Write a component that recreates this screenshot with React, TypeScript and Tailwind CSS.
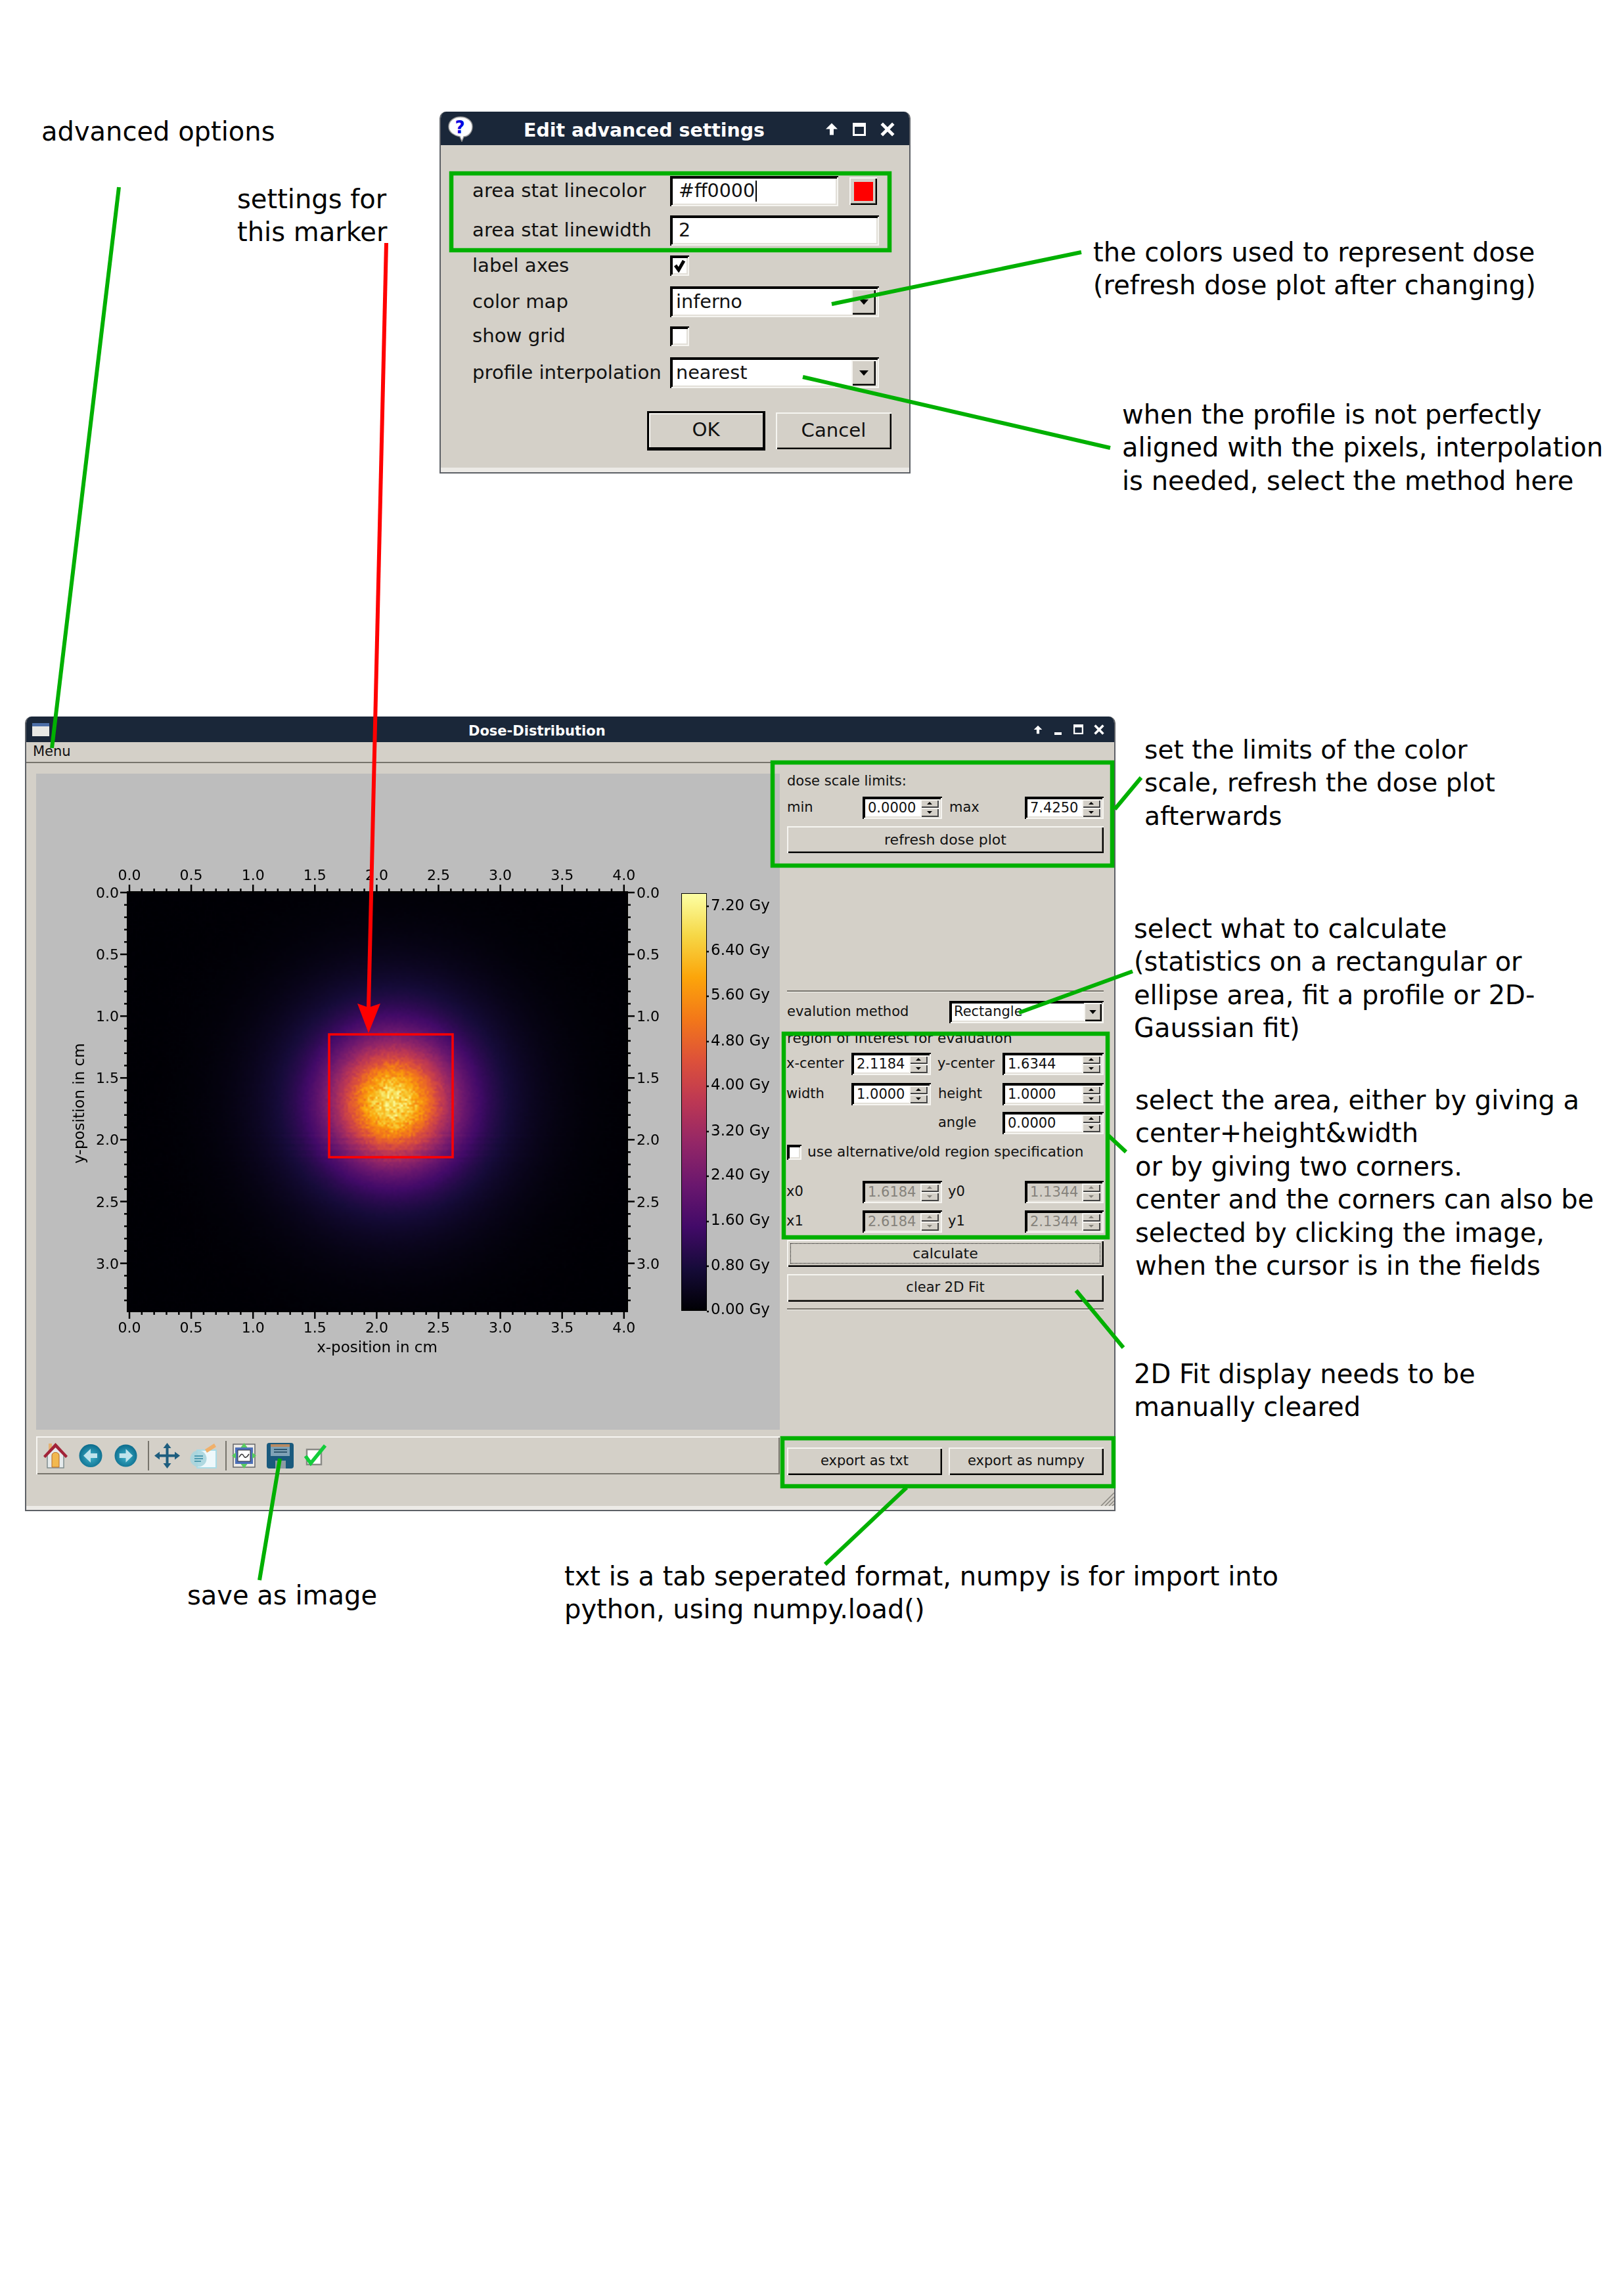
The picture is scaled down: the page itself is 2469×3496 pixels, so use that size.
import React, { useEffect, useRef } from 'react';

const sunken = 'shadow-[inset_2px_2px_0_#000,inset_-2px_-2px_0_#f6f5f1,inset_4px_4px_0_#000,inset_-4px_-4px_0_#e2dfd8]';
const raised = 'shadow-[inset_2px_2px_0_#f6f5f1,inset_-2px_-2px_0_#000,inset_-3px_-3px_0_#77746c]';
const spinRaised = 'shadow-[inset_2px_2px_0_#f6f5f1,inset_-2px_-2px_0_#444]';

const inferno: [number, number, number][] = [
    [0, 0, 4], [22, 11, 57], [66, 10, 104], [106, 23, 110], [147, 38, 103], [188, 55, 84],
    [221, 81, 58], [243, 120, 25], [252, 165, 10], [246, 215, 70], [252, 255, 164],
];

const mapColor = (v: number) => {
    const t = Math.max(0, Math.min(0.9999, v)) * 10;
    const i = Math.floor(t);
    const f = t - i;
    return inferno[i].map((c, k) => c + (inferno[i + 1][k] - c) * f);
};

// the dose picture: a noisy gaussian, drawn in coarse cells and scaled up
const DoseImage: React.FC = () => {
    const ref = useRef<HTMLCanvasElement>(null);
    useEffect(() => {
        const ctx = ref.current?.getContext('2d');
        if (!ctx) return;
        const w = 254;
        const h = 213;
        const img = ctx.createImageData(w, h);
        let seed = 1234567;
        const rnd = () => {
            seed = (seed * 16807) % 2147483647;
            return seed / 2147483647;
        };
        for (let y = 0; y < h; y++) {
            for (let x = 0; x < w; x++) {
                const dx = (x - 134.3) * 3;
                const dy = (y - 106.3) * 3;
                const r2 = dx * dx + dy * dy;
                const core = Math.exp(-r2 / (2 * 58 * 58));
                const tail = Math.exp(-r2 / (2 * 112 * 112));
                const noise = 1 + (rnd() + rnd() - 1) * (0.03 + 0.13 * core);
                // faint horizontal bands low in the beam
                const band = dy > 45 && dy < 90 ? 1 + 0.04 * Math.sin(y * 1.9) : 1;
                const v = (0.62 * core + 0.31 * tail) * noise * band + rnd() * 0.004;
                const [r, g, b] = mapColor(v);
                const p = (y * w + x) * 4;
                img.data[p] = r;
                img.data[p + 1] = g;
                img.data[p + 2] = b;
                img.data[p + 3] = 255;
            }
        }
        ctx.putImageData(img, 0, 0);
    }, []);
    return <canvas ref={ref} width={254} height={213} className="absolute left-[139px] top-[180px] h-[639px] w-[761px]" />;
};

const xLabels = ['0.0', '0.5', '1.0', '1.5', '2.0', '2.5', '3.0', '3.5', '4.0'];
const yLabels = ['0.0', '0.5', '1.0', '1.5', '2.0', '2.5', '3.0'];
const barLabels: [string, number, number][] = [
    ['7.20 Gy', 1378, 1380], ['6.40 Gy', 1446, 1449], ['5.60 Gy', 1514, 1517], ['4.80 Gy', 1584, 1586],
    ['4.00 Gy', 1651, 1654], ['3.20 Gy', 1721, 1723], ['2.40 Gy', 1788, 1791], ['1.60 Gy', 1857, 1860],
    ['0.80 Gy', 1926, 1928], ['0.00 Gy', 1993, 1997],
];

const PlotAxes: React.FC = () => {
    const xMinor = Array.from({ length: 41 }, (_, i) => 197 + i * 18.82);
    const yMinor = Array.from({ length: 34 }, (_, i) => 1359 + i * 18.82);
    return (
        <svg viewBox="55 1178 1132 999" className="absolute inset-0 h-full w-full">
            <g stroke="#000" strokeWidth="2.500">
                {xMinor.map((x, i) => {
                    const len = i % 5 === 0 ? 11 : 5;
                    return (
                        <g key={i}>
                            <line x1={x} x2={x} y1={1358 - len} y2={1358} />
                            <line x1={x} x2={x} y1={1997} y2={1997 + len} />
                        </g>
                    );
                })}
                {yMinor.map((y, i) => {
                    const len = i % 5 === 0 ? 11 : 5;
                    return (
                        <g key={i}>
                            <line x1={194 - len} x2={194} y1={y} y2={y} />
                            <line x1={955} x2={955 + len} y1={y} y2={y} />
                        </g>
                    );
                })}
                {barLabels.map(([t, , y]) => <line key={t} x1={1076} x2={1079} y1={y} y2={y} />)}
            </g>
            <g fill="#000" fontSize="22" fontFamily="'DejaVu Sans',sans-serif">
                {xLabels.map((t, i) => (
                    <g key={t} textAnchor="middle">
                        <text x={197 + i * 94.1} y={1340}>{t}</text>
                        <text x={197 + i * 94.1} y={2029}>{t}</text>
                    </g>
                ))}
                {yLabels.map((t, i) => (
                    <g key={t}>
                        <text x={181} y={1367 + i * 94.1} textAnchor="end">{t}</text>
                        <text x={969} y={1367 + i * 94.1}>{t}</text>
                    </g>
                ))}
                <g fontSize="23">
                    {barLabels.map(([t, y]) => <text key={t} x={1082} y={y + 8}>{t}</text>)}
                    <text x={574} y={2059} textAnchor="middle">x-position in cm</text>
                    <text x={0} y={0} textAnchor="middle" transform="translate(128 1680) rotate(-90)">y-position in cm</text>
                </g>
            </g>
            <rect x="194" y="1358" width="761" height="639" fill="none" stroke="#000" strokeWidth="2" />
            <rect x="501" y="1575" width="188" height="187" fill="none" stroke="#ff0000" strokeWidth="3.500" />
        </svg>
    );
};

const Spin: React.FC<{ value: string; disabled?: boolean; className: string }> = ({ value, disabled, className }) => (
    <div className={`flex h-[34px] items-center pl-[8px] pr-[5px] ${sunken} ${disabled ? 'bg-[#d4d0c8] text-[#85827b]' : 'bg-white text-[#111]'} ${className}`}>
        <span className="flex-1 leading-none">{value}</span>
        <div className="flex h-[27px] w-[28px] flex-col">
            <div className={`flex flex-1 items-center justify-center bg-[#d4d0c8] ${spinRaised}`}>
                <svg viewBox="0 0 8 4" className="h-[4px] w-[8px]"><path d="M0 4h8L4 0z" fill={disabled ? '#85827b' : '#000'} /></svg>
            </div>
            <div className={`flex flex-1 items-center justify-center bg-[#d4d0c8] ${spinRaised}`}>
                <svg viewBox="0 0 8 4" className="h-[4px] w-[8px]"><path d="M0 0h8L4 4z" fill={disabled ? '#85827b' : '#000'} /></svg>
            </div>
        </div>
    </div>
);

const ComboArrow: React.FC<{ large?: boolean }> = ({ large }) => (
    <div className={`flex items-center justify-center bg-[#d4d0c8] ${raised} ${large ? 'h-[39px] w-[37px]' : 'h-[28px] w-[27px]'}`}>
        <svg viewBox="0 0 14 8" className={large ? 'h-[8px] w-[14px]' : 'h-[6px] w-[11px]'}><path d="M0 0h14L7 8z" fill="#000" /></svg>
    </div>
);

const PanelButton: React.FC<{ label: string; className: string }> = ({ label, className }) => (
    <div className={`flex items-center justify-center bg-[#d4d0c8] text-[#111] ${raised} ${className}`}>{label}</div>
);

const Separator: React.FC<{ className: string }> = ({ className }) => (
    <div className={`h-[3px] border-t-2 border-b border-t-[#77746c] border-b-[#f6f5f1] ${className}`} />
);

const UpArrow: React.FC<{ className: string }> = ({ className }) => (
    <svg viewBox="0 0 20 20" className={className}><path d="M10 1l9 9h-6v9H7v-9H1z" fill="#fff" /></svg>
);
const MaxIcon: React.FC<{ className: string }> = ({ className }) => (
    <svg viewBox="0 0 20 20" className={className}><path d="M0 0h20v20H0zM3 6v11h14V6z" fill="#fff" fillRule="evenodd" /></svg>
);
const CloseIcon: React.FC<{ className: string }> = ({ className }) => (
    <svg viewBox="0 0 20 20" className={className}><path d="M2 2l16 16M18 2L2 18" stroke="#fff" strokeWidth="4.5" /></svg>
);

const AdvancedDialog: React.FC = () => (
    <div className="absolute left-[669px] top-[170px] flex h-[551px] w-[717px] flex-col overflow-hidden rounded-t-[10px] border-x-2 border-b-2 border-x-[#5d6066] border-b-[#5d6066] bg-[#d4d0c8] text-[29.2px] text-[#111]">
        {/* Title bar */}
        <div className="-mx-[2px] flex h-[51px] shrink-0 items-center bg-[#1a2739]">
            <svg viewBox="0 0 38 40" className="ml-[13px] h-[40px] w-[38px]">
                <path d="M19 2c10 0 18 6 18 15s-7 15-13 15l-3 7-3-7C11 31 1 26 1 17S9 2 19 2z" fill="#fff" stroke="#999" strokeWidth="1.5" />
                <text x="18" y="27" fill="#0000e0" fontSize="26" fontWeight="700" textAnchor="middle" fontFamily="'DejaVu Sans',sans-serif">?</text>
            </svg>
            <span className="ml-[77px] mt-[7px] text-[28.400px] font-bold text-white">Edit advanced settings</span>
            <UpArrow className="ml-auto mt-[2px] h-[21px] w-[20px]" />
            <MaxIcon className="ml-[22px] mt-[2px] h-[20px] w-[20px]" />
            <CloseIcon className="ml-[22px] mr-[24px] mt-[2px] h-[22px] w-[22px]" />
        </div>
        <div className="ml-[48px] mt-[47px] flex h-[46px] items-center">
            <span className="w-[301px]">area stat linecolor</span>
            <div className={`flex h-[46px] w-[256px] items-center bg-white pl-[13px] text-[28.5px] ${sunken}`}>
                #ff0000<span className="ml-[1px] h-[32px] w-[2px] bg-black" />
            </div>
            <div className={`ml-[17px] flex h-[42px] w-[42px] items-center justify-center bg-[#d4d0c8] ${raised}`}>
                <div className="h-[29px] w-[29px] bg-[#ff0000]" />
            </div>
        </div>
        <div className="ml-[48px] mt-[14px] flex h-[46px] items-center">
            <span className="w-[301px]">area stat linewidth</span>
            <div className={`flex h-[46px] w-[318px] items-center bg-white pl-[13px] text-[28.5px] ${sunken}`}>2</div>
        </div>
        <div className="ml-[48px] mt-[15px] flex h-[31px] items-center">
            <span className="w-[301px]">label axes</span>
            <div className={`flex h-[31px] w-[29px] items-center justify-center bg-white ${sunken}`}>
                <svg viewBox="0 0 20 20" className="h-[20px] w-[20px]"><path d="M3 9l5 7L16 2" fill="none" stroke="#000" strokeWidth="5" /></svg>
            </div>
        </div>
        <div className="ml-[48px] mt-[16px] flex h-[47px] items-center">
            <span className="w-[301px]">color map</span>
            <div className={`flex h-[47px] w-[318px] items-center justify-between bg-white pl-[9px] pr-[5px] text-[28.7px] ${sunken}`}>
                inferno
                <ComboArrow large />
            </div>
        </div>
        <div className="ml-[48px] mt-[14px] flex h-[30px] items-center">
            <span className="w-[301px]">show grid</span>
            <div className={`h-[30px] w-[29px] bg-white ${sunken}`} />
        </div>
        <div className="ml-[48px] mt-[17px] flex h-[47px] items-center">
            <span className="w-[301px]">profile interpolation</span>
            <div className={`flex h-[47px] w-[318px] items-center justify-between bg-white pl-[9px] pr-[5px] text-[28.7px] ${sunken}`}>
                nearest
                <ComboArrow large />
            </div>
        </div>
        <div className="mt-[35px] flex items-center">
            <div className="ml-[314px] flex h-[60px] w-[180px] items-center justify-center border-[3px] border-b-[5px] border-r-[4px] border-black bg-[#d4d0c8] shadow-[inset_2px_2px_0_#f6f5f1]">OK</div>
            <PanelButton label="Cancel" className="ml-[16px] h-[56px] w-[176px]" />
        </div>
        <div className="mt-auto h-[7px] bg-[#eceae6]" />
    </div>
);

const HomeIcon = () => (
    <svg viewBox="0 0 37 40" className="ml-[11px] h-[40px] w-[37px]">
        <rect x="8" y="2" width="5" height="12" fill="#e4b172" />
        <path d="M6 18L18.500 6 31 18v21H6z" fill="#e6ebec" stroke="#7f8c8d" strokeWidth="1.5" />
        <path d="M13 20c0-6 11-6 11 0v18H13z" fill="#f2b84f" stroke="#b5682a" />
        <path d="M0 21L18.500 1 37 21l-3 3L18.500 8 3 24z" fill="#a22338" />
    </svg>
);

const RoundArrow: React.FC<{ flip?: boolean; className: string }> = ({ flip, className }) => (
    <svg viewBox="0 0 36 37" className={className}>
        <defs>
            <radialGradient id={flip ? 'roundF' : 'roundB'} cx="0.5" cy="0.55" r="0.55">
                <stop offset="0" stopColor="#3fb2cb" />
                <stop offset="1" stopColor="#0b6b8c" />
            </radialGradient>
        </defs>
        <circle cx="18" cy="18.500" r="17.500" fill={`url(#${flip ? 'roundF' : 'roundB'})`} />
        <path d={flip ? 'M8 15h10V8l11 10.500L18 29v-7H8z' : 'M28 15H18V8L7 18.500 18 29v-7h10z'} fill="#bfe3ec" />
    </svg>
);

const MoveIcon = () => (
    <svg viewBox="0 0 39 39" className="ml-[8px] h-[39px] w-[39px]">
        <path d="M19.500 0l6 8h-4v9.500H31v-4l8 6-8 6v-4h-9.500V31h4l-6 8-6-8h4v-9.500H8v4l-8-6 8-6v4h9.500V8h-4z" fill="#1d5d7e" />
    </svg>
);

const ConfigIcon = () => (
    <svg viewBox="0 0 41 39" className="ml-[15px] h-[39px] w-[41px]">
        <rect x="11" y="11" width="29" height="27" fill="#eef8fb" stroke="#a9dbe6" strokeWidth="2" />
        <circle cx="13" cy="24" r="12.500" fill="#a8d5de" opacity="0.9" />
        <path d="M7 20h13M7 24h13M7 28h10" stroke="#4f9bb0" strokeWidth="2" />
        <path d="M23 10L37 1l3 5-14 9z" fill="#f0b06a" />
    </svg>
);

const FitIcon = () => (
    <svg viewBox="0 0 37 41" className="ml-[8px] h-[41px] w-[37px]">
        <rect x="2" y="3" width="33" height="35" fill="#eceae6" stroke="#66676a" strokeWidth="1.5" />
        <rect x="5" y="8" width="27" height="25" fill="#4c6fb8" />
        <rect x="9" y="12" width="19" height="17" fill="#fff" stroke="#333" />
        <path d="M11 23c3-6 5-6 7-2s5 2 8-3" fill="none" stroke="#333" strokeWidth="1.5" />
        <path d="M18.500 1l5 7h-10zM18.500 40l5-7h-10zM0 20.500l6-5v10zM37 20.500l-6-5v10z" fill="#58cc5f" />
    </svg>
);

const SaveIcon = () => (
    <svg viewBox="0 0 41 39" className="ml-[16px] h-[39px] w-[41px]">
        <rect x="0" y="0" width="41" height="39" rx="4" fill="#1a5a7d" />
        <rect x="6" y="2" width="29" height="18" fill="#7fa2b6" />
        <rect x="6" y="2" width="29" height="4" fill="#b88a62" />
        <path d="M11 10h20M11 14h20" stroke="#163f58" strokeWidth="1.5" />
        <rect x="13" y="27" width="16" height="12" fill="#8c9aa3" />
    </svg>
);

const CheckIcon = () => (
    <svg viewBox="0 0 36 37" className="ml-[15px] h-[37px] w-[36px]">
        <rect x="5" y="9" width="22" height="23" fill="#fff" stroke="#8a8a86" strokeWidth="2.5" />
        <path d="M3 19l8 11L33 3" fill="none" stroke="#13cc3a" strokeWidth="5.500" />
    </svg>
);

const DoseWindow: React.FC = () => (
    <div className="absolute left-[38px] top-[1091px] flex h-[1210px] w-[1660px] flex-col overflow-hidden rounded-t-[10px] border-x-2 border-b-2 border-x-[#5d6066] border-b-[#5d6066] bg-[#d4d0c8] text-[21px] text-[#111]">
        {/* Title bar */}
        <div className="-mx-[2px] flex h-[39px] shrink-0 items-center bg-[#1a2739]">
            <div className="ml-[11px] h-[20px] w-[26px] border-t-[5px] border-t-[#4d6fa8] bg-[#e8e8e4]" />
            <span className="ml-[638px] mt-[6px] font-bold text-white">Dose-Distribution</span>
            <UpArrow className="ml-auto h-[14px] w-[14px]" />
            <div className="ml-[18px] mt-[12px] h-[4px] w-[11px] bg-white" />
            <MaxIcon className="ml-[18px] h-[15px] w-[15px]" />
            <CloseIcon className="ml-[16px] mr-[17px] h-[16px] w-[16px]" />
        </div>
        {/* Menu */}
        <div className="flex h-[32px] shrink-0 items-center border-b-2 border-b-[#77746c] pl-[10px]">Menu</div>
        <div className="flex min-h-0 flex-1">
            <div className="ml-[15px] flex w-[1132px] shrink-0 flex-col">
                <div className="relative mt-[16px] h-[999px] shrink-0 bg-[#bdbdbd]">
                    <DoseImage />
                    <div className="absolute left-[982px] top-[182px] h-[636px] w-[39px] border border-black bg-[linear-gradient(to_top,#000004_0%,#160b39_10%,#420a68_20%,#6a176e_30%,#932667_40%,#bc3754_50%,#dd513a_60%,#f37819_70%,#fca50a_80%,#f6d746_90%,#fcffa4_100%)]" />
                    <PlotAxes />
                </div>
                <div className="mt-[10px] flex h-[58px] shrink-0 items-center bg-[#d4d0c8] shadow-[inset_2px_2px_0_#f6f5f1,inset_-2px_-2px_0_#77746c]">
                    <HomeIcon />
                    <RoundArrow className="ml-[17px] h-[37px] w-[36px]" />
                    <RoundArrow flip className="ml-[18px] h-[37px] w-[35px]" />
                    <div className="ml-[16px] h-[45px] w-[2px] bg-[#77746c]" />
                    <MoveIcon />
                    <ConfigIcon />
                    <div className="ml-[13px] h-[45px] w-[2px] bg-[#77746c]" />
                    <FitIcon />
                    <SaveIcon />
                    <CheckIcon />
                </div>
            </div>
            {/* Right column */}
            <div className="flex min-w-0 flex-1 flex-col pl-[11px] pr-[16px]">
                <div className="mt-[15px] flex h-[26px] items-center">dose scale limits:</div>
                <div className="mt-[10px] flex items-center">
                    <span className="w-[115px]">min</span>
                    <Spin value="0.0000" className="w-[121px]" />
                    <span className="ml-[11px] w-[115px]">max</span>
                    <Spin value="7.4250" className="flex-1" />
                </div>
                <PanelButton label="refresh dose plot" className="mt-[11px] h-[41px] text-[22px]" />
                <Separator className="mt-[209px]" />
                <div className="mt-[13px] flex items-center">
                    <span className="w-[247px]">evalution method</span>
                    <div className={`flex h-[34px] flex-1 items-center justify-between bg-white pl-[7px] pr-[3px] text-[#111] ${sunken}`}>
                        Rectangle
                        <ComboArrow />
                    </div>
                </div>
                <div className="mt-[10px] flex h-[26px] items-center text-[21.600px]">region of interest for evaluation</div>
                <div className="-ml-[1px] mt-[9px] flex items-center">
                    <span className="w-[99px]">x-center</span>
                    <Spin value="2.1184" className="w-[121px]" />
                    <span className="ml-[10px] w-[99px]">y-center</span>
                    <Spin value="1.6344" className="flex-1" />
                </div>
                <div className="-ml-[1px] mt-[12px] flex items-center">
                    <span className="w-[99px]">width</span>
                    <Spin value="1.0000" className="w-[121px]" />
                    <span className="ml-[11px] w-[98px]">height</span>
                    <Spin value="1.0000" className="flex-1" />
                </div>
                <div className="-ml-[1px] mt-[10px] flex items-center">
                    <span className="ml-[231px] w-[98px]">angle</span>
                    <Spin value="0.0000" className="flex-1" />
                </div>
                <div className="mt-[16px] flex h-[23px] items-center">
                    <div className={`h-[23px] w-[22px] bg-white ${sunken}`} />
                    <span className="ml-[9px] text-[21.600px]">use alternative/old region specification</span>
                </div>
                <div className="-ml-[1px] mt-[32px] flex items-center">
                    <span className="w-[116px]">x0</span>
                    <Spin disabled value="1.6184" className="w-[121px]" />
                    <span className="ml-[9px] w-[117px]">y0</span>
                    <Spin disabled value="1.1344" className="flex-1" />
                </div>
                <div className="-ml-[1px] mt-[11px] flex items-center">
                    <span className="w-[116px]">x1</span>
                    <Spin disabled value="2.6184" className="w-[121px]" />
                    <span className="ml-[9px] w-[117px]">y1</span>
                    <Spin disabled value="2.1344" className="flex-1" />
                </div>
                <div className={`mt-[11px] flex h-[41px] bg-[#d4d0c8] p-[5px] ${raised}`}>
                    <div className="flex flex-1 items-center justify-center border border-dotted border-black text-[22px]">calculate</div>
                </div>
                <PanelButton label="clear 2D Fit" className="mt-[11px] h-[42px]" />
                <Separator className="mt-[10px]" />
                <div className="mb-[47px] mt-auto flex gap-[10px]">
                    <PanelButton label="export as txt" className="h-[42px] flex-1" />
                    <PanelButton label="export as numpy" className="h-[42px] flex-1" />
                </div>
            </div>
        </div>
        <div className="h-[6px] shrink-0 bg-[#eceae6]" />
        {/* Resize grip */}
        <svg viewBox="0 0 22 22" className="absolute bottom-[6px] right-0 h-[22px] w-[22px]">
            <path d="M2 22L22 2M8 22L22 8M14 22l8-8M19 22l3-3" stroke="#8a8780" strokeWidth="1.500" />
        </svg>
    </div>
);

const Note: React.FC<{ className: string; children: React.ReactNode }> = ({ className, children }) => (
    <div className={`absolute whitespace-nowrap leading-[50.4px] text-black ${className}`}>{children}</div>
);

const Callouts: React.FC = () => (
    <svg viewBox="0 0 2469 3496" className="pointer-events-none absolute inset-0 h-[3496px] w-[2469px]">
        <g fill="none" stroke="#00b000" strokeWidth="6.500">
            <rect x="687" y="264" width="667" height="117" />
            <rect x="1176" y="1161" width="517" height="157" />
            <rect x="1193" y="1574" width="493" height="310" />
            <rect x="1191" y="2190" width="504" height="73" />
        </g>
        <g fill="none" stroke="#00b000" strokeWidth="6">
            <path d="M181 285L79 1139" />
            <path d="M1646 384L1266 463" />
            <path d="M1690 682L1222 574" />
            <path d="M1737 1184L1697 1232" />
            <path d="M1724 1479L1551 1542" />
            <path d="M1714 1754L1685 1727" />
            <path d="M1710 2052L1638 1965" />
            <path d="M1380 2265L1256 2382" />
            <path d="M426 2221L395 2406" />
        </g>
        <path d="M588 370L561 1535" fill="none" stroke="#ff0000" strokeWidth="6" />
        <path d="M561 1573L544 1528 561 1534 579 1528z" fill="#ff0000" />
    </svg>
);

export default function App() {
    return (
        <div className="relative h-[3496px] w-[2469px] overflow-hidden bg-white [font-family:'DejaVu_Sans',sans-serif]">
            <AdvancedDialog />
            <DoseWindow />

            <Note className="left-[63px] top-[175px] text-[40px]">advanced options</Note>
            <Note className="left-[361px] top-[278px] text-[40px]">settings for<br />this marker</Note>
            <Note className="left-[1664px] top-[359px] text-[40px]">the colors used to represent dose<br />(refresh dose plot after changing)</Note>
            <Note className="left-[1708px] top-[606px] text-[40px]">when the profile is not perfectly<br />aligned with the pixels, interpolation<br />is needed, select the method here</Note>
            <Note className="left-[1742px] top-[1117px] text-[39.200px]">set the limits of the color<br />scale, refresh the dose plot<br />afterwards</Note>
            <Note className="left-[1726px] top-[1389px] text-[40px]">select what to calculate<br />(statistics on a rectangular or<br />ellipse area, fit a profile or 2D-<br />Gaussian fit)</Note>
            <Note className="left-[1728px] top-[1650px] text-[40px]">select the area, either by giving a<br />center+height&amp;width<br />or by giving two corners.<br />center and the corners can also be<br />selected by clicking the image,<br />when the cursor is in the fields</Note>
            <Note className="left-[1726px] top-[2067px] text-[40px]">2D Fit display needs to be<br />manually cleared</Note>
            <Note className="left-[285px] top-[2404px] text-[40px]">save as image</Note>
            <Note className="left-[859px] top-[2375px] text-[40px]">txt is a tab seperated format, numpy is for import into<br />python, using numpy.load()</Note>

            <Callouts />
        </div>
    );
}
